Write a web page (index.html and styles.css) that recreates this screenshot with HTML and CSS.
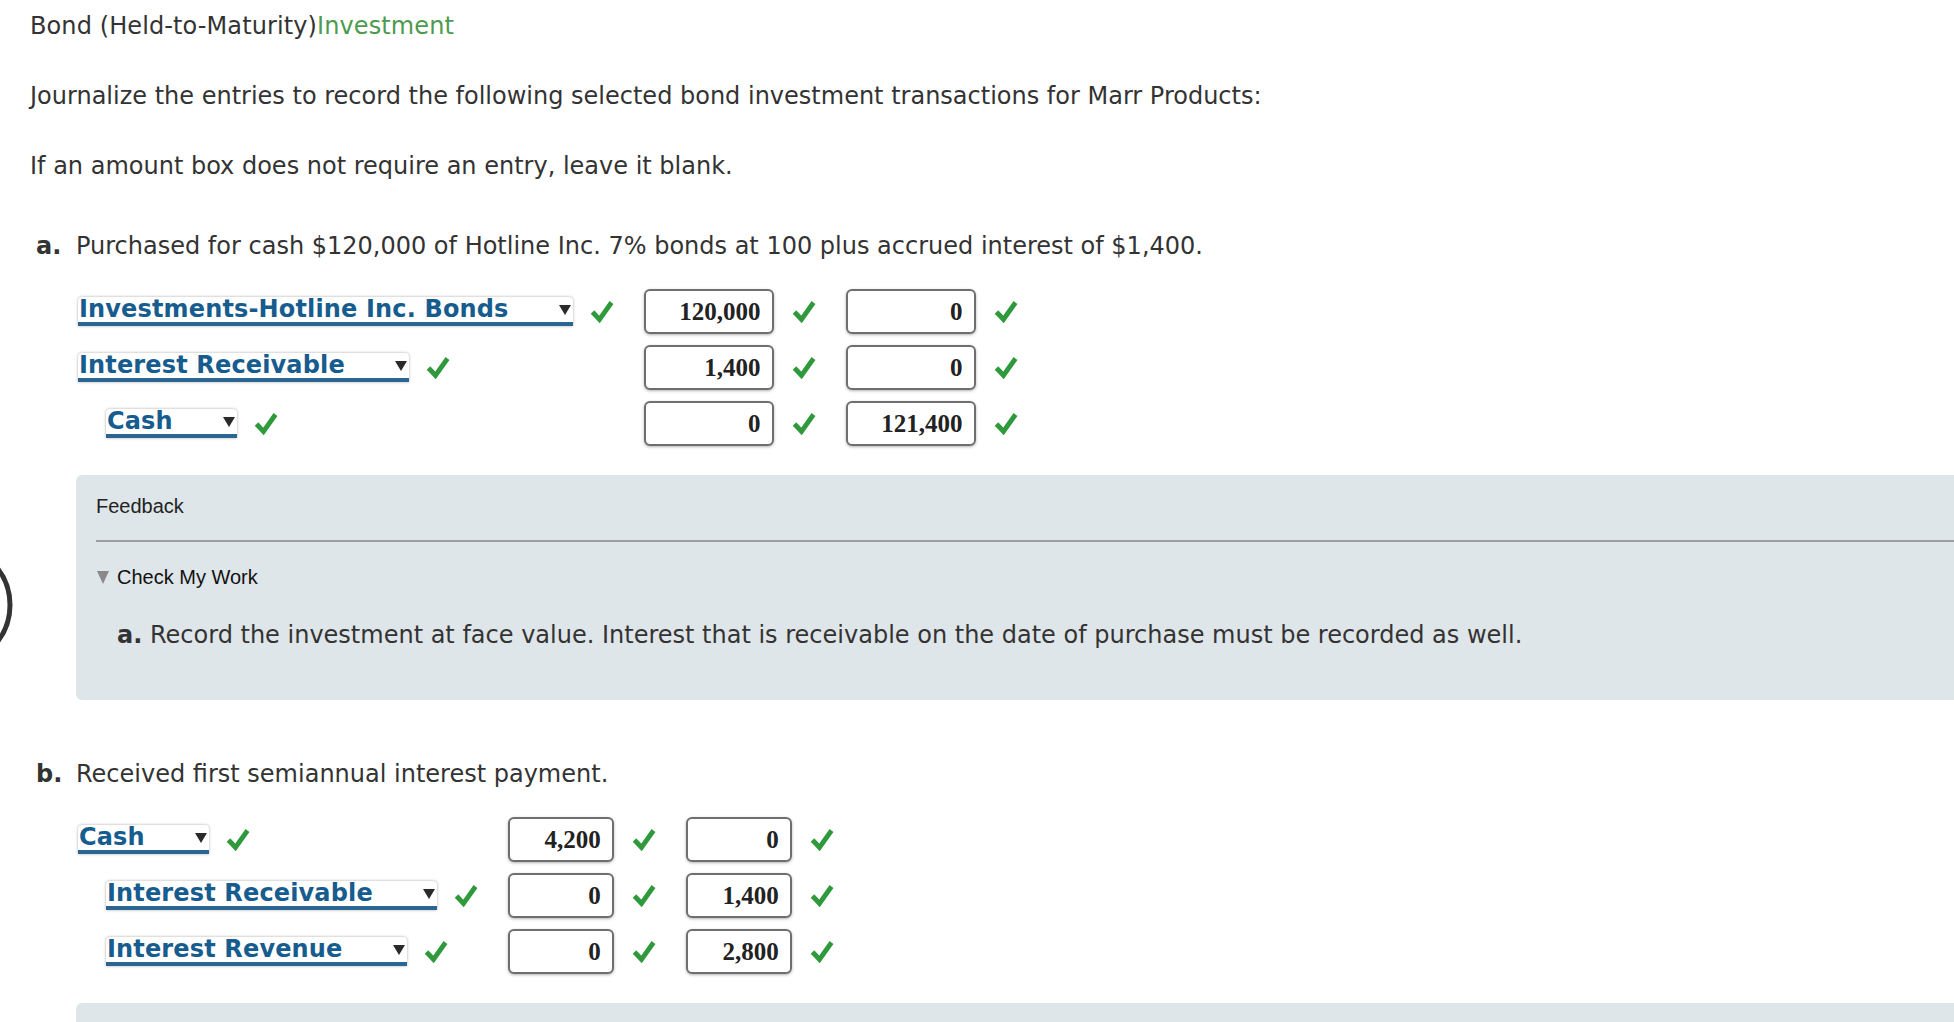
FILE: index.html
```html
<!DOCTYPE html>
<html lang="en">
<head>
  <meta charset="UTF-8" />
  <title>Bond (Held-to-Maturity) Investment</title>
  <link rel="stylesheet" href="styles.css">
</head>
<body>
  <svg class="nav-ring" viewBox="0 0 16 80" aria-hidden="true"><circle cx="-50" cy="40" r="60" /></svg>

  <div class="page">
    <h1 class="title">Bond (Held-to-Maturity)<span class="topic">Investment</span></h1>
    <p class="line">Journalize the entries to record the following selected bond investment transactions for Marr Products:</p>
    <p class="line">If an amount box does not require an entry, leave it blank.</p>

    <section class="part">
      <p class="part-head"><b class="part-key">a.</b><span>Purchased for cash $120,000 of Hotline Inc. 7% bonds at 100 plus accrued interest of $1,400.</span></p>

      <div class="journal">
        <div class="acct">
          <div class="select"><span>Investments-Hotline Inc. Bonds</span><i class="caret"></i></div>
          <svg class="check" viewBox="0 0 24 24"><path d="M2.5 12.5 9.5 20 21.5 3" /></svg>
        </div>
        <div class="amt">
          <input class="amount" type="text" value="120,000" readonly>
          <svg class="check" viewBox="0 0 24 24"><path d="M2.5 12.5 9.5 20 21.5 3" /></svg>
        </div>
        <div class="amt">
          <input class="amount" type="text" value="0" readonly>
          <svg class="check" viewBox="0 0 24 24"><path d="M2.5 12.5 9.5 20 21.5 3" /></svg>
        </div>

        <div class="acct">
          <div class="select"><span>Interest Receivable</span><i class="caret"></i></div>
          <svg class="check" viewBox="0 0 24 24"><path d="M2.5 12.5 9.5 20 21.5 3" /></svg>
        </div>
        <div class="amt">
          <input class="amount" type="text" value="1,400" readonly>
          <svg class="check" viewBox="0 0 24 24"><path d="M2.5 12.5 9.5 20 21.5 3" /></svg>
        </div>
        <div class="amt">
          <input class="amount" type="text" value="0" readonly>
          <svg class="check" viewBox="0 0 24 24"><path d="M2.5 12.5 9.5 20 21.5 3" /></svg>
        </div>

        <div class="acct credit">
          <div class="select"><span>Cash</span><i class="caret"></i></div>
          <svg class="check" viewBox="0 0 24 24"><path d="M2.5 12.5 9.5 20 21.5 3" /></svg>
        </div>
        <div class="amt">
          <input class="amount" type="text" value="0" readonly>
          <svg class="check" viewBox="0 0 24 24"><path d="M2.5 12.5 9.5 20 21.5 3" /></svg>
        </div>
        <div class="amt">
          <input class="amount" type="text" value="121,400" readonly>
          <svg class="check" viewBox="0 0 24 24"><path d="M2.5 12.5 9.5 20 21.5 3" /></svg>
        </div>
      </div>

      <div class="feedback">
        <div class="fb-label">Feedback</div>
        <hr class="fb-rule">
        <div class="toggle">Check My Work</div>
        <p class="fb-text"><b>a.</b> Record the investment at face value. Interest that is receivable on the date of purchase must be recorded as well.</p>
      </div>
    </section>

    <section class="part part-next">
      <p class="part-head"><b class="part-key">b.</b><span>Received first semiannual interest payment.</span></p>

      <div class="journal journal-narrow">
        <div class="acct">
          <div class="select"><span>Cash</span><i class="caret"></i></div>
          <svg class="check" viewBox="0 0 24 24"><path d="M2.5 12.5 9.5 20 21.5 3" /></svg>
        </div>
        <div class="amt">
          <input class="amount" type="text" value="4,200" readonly>
          <svg class="check" viewBox="0 0 24 24"><path d="M2.5 12.5 9.5 20 21.5 3" /></svg>
        </div>
        <div class="amt">
          <input class="amount" type="text" value="0" readonly>
          <svg class="check" viewBox="0 0 24 24"><path d="M2.5 12.5 9.5 20 21.5 3" /></svg>
        </div>

        <div class="acct credit">
          <div class="select"><span>Interest Receivable</span><i class="caret"></i></div>
          <svg class="check" viewBox="0 0 24 24"><path d="M2.5 12.5 9.5 20 21.5 3" /></svg>
        </div>
        <div class="amt">
          <input class="amount" type="text" value="0" readonly>
          <svg class="check" viewBox="0 0 24 24"><path d="M2.5 12.5 9.5 20 21.5 3" /></svg>
        </div>
        <div class="amt">
          <input class="amount" type="text" value="1,400" readonly>
          <svg class="check" viewBox="0 0 24 24"><path d="M2.5 12.5 9.5 20 21.5 3" /></svg>
        </div>

        <div class="acct credit">
          <div class="select"><span>Interest Revenue</span><i class="caret"></i></div>
          <svg class="check" viewBox="0 0 24 24"><path d="M2.5 12.5 9.5 20 21.5 3" /></svg>
        </div>
        <div class="amt">
          <input class="amount" type="text" value="0" readonly>
          <svg class="check" viewBox="0 0 24 24"><path d="M2.5 12.5 9.5 20 21.5 3" /></svg>
        </div>
        <div class="amt">
          <input class="amount" type="text" value="2,800" readonly>
          <svg class="check" viewBox="0 0 24 24"><path d="M2.5 12.5 9.5 20 21.5 3" /></svg>
        </div>
      </div>

      <div class="feedback feedback-closed"></div>
    </section>
  </div>
</body>
</html>
```

FILE: styles.css
```css
* {
  box-sizing: border-box;
}

html {
  overflow-x: hidden;
}

body {
  margin: 0;
  background: #fff;
  color: #333;
  font-family: Verdana, "DejaVu Sans", sans-serif;
  font-size: 24px;
  line-height: 30px;
}

.nav-ring {
  position: absolute;
  left: 0;
  top: 565px;
  width: 16px;
  height: 80px;
  fill: none;
  stroke: #333;
  stroke-width: 5;
}

.page {
  padding: 11px 0 0 30px;
}

.title {
  margin: 0;
  font-size: 24px;
  font-weight: normal;
  line-height: 30px;
  letter-spacing: 0.1px;
}

.topic {
  color: #4e9a4e;
}

.line {
  margin: 40px 0 0;
}

.part-head {
  display: flex;
  margin: 50px 0 0;
  padding-left: 6px;
}

.part-next .part-head {
  margin-top: 59px;
}

.part-key {
  width: 40px;
}

.journal {
  display: grid;
  grid-template-columns: repeat(3, max-content);
  column-gap: 30px;
  row-gap: 11px;
  align-items: center;
  margin: 28px 0 0 48px;
}

.acct {
  display: flex;
  align-items: center;
  gap: 17px;
}

.amt {
  display: flex;
  align-items: center;
  gap: 18px;
}

.credit {
  padding-left: 28px;
}

.select {
  display: flex;
  align-items: center;
  height: 29px;
  padding: 0 2px 0 1px;
  background: #fff;
  border-bottom: 4px solid #2b6592;
  border-radius: 4px 4px 0 0;
  box-shadow: 0 0 3px rgba(0, 0, 0, 0.35);
  color: #175c8e;
  font-size: 24px;
  font-weight: bold;
  line-height: 25px;
  letter-spacing: 0.15px;
}

.caret {
  margin-left: 50px;
  border-left: 6.5px solid transparent;
  border-right: 6.5px solid transparent;
  border-top: 10px solid #2a2a2a;
}

.check {
  width: 24px;
  height: 25px;
  fill: none;
  stroke: #30993c;
  stroke-width: 4.8;
}

.amount {
  width: 130px;
  height: 45px;
  padding: 0 11px;
  border: 2px solid #6f6f6f;
  border-radius: 6px;
  box-shadow: 0 1px 3px rgba(0, 0, 0, 0.3);
  background: #fff;
  color: #222;
  text-align: right;
  font: bold 25px "Liberation Serif", "Times New Roman", serif;
}

.journal-narrow .amount {
  width: 106px;
}

.feedback {
  margin: 29px -40px 0 46px;
  padding: 19px 0 50px 20px;
  background: #dfe6e9;
  border-radius: 6px;
}

.feedback-closed {
  min-height: 120px;
}

.fb-label {
  font-family: "Liberation Sans", Arial, sans-serif;
  font-size: 20px;
  line-height: 24px;
  color: #222;
}

.fb-rule {
  margin: 22px 0 0;
  border: 0;
  border-top: 2px solid #9a9fa3;
}

.toggle {
  display: flex;
  align-items: center;
  gap: 8px;
  margin-top: 23px;
  font-family: "Liberation Sans", Arial, sans-serif;
  font-size: 20px;
  line-height: 24px;
  color: #111;
}

.toggle::before {
  content: "";
  border-left: 6px solid transparent;
  border-right: 6px solid transparent;
  border-top: 13px solid #8a8a8a;
  margin-left: 1px;
}

.fb-text {
  margin: 31px 0 0 21px;
}
```
